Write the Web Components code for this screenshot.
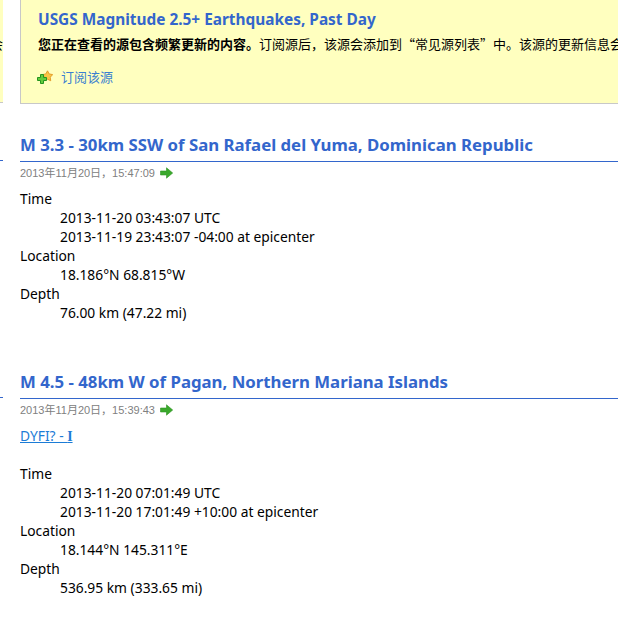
<!DOCTYPE html>
<html lang="zh">
<head>
<meta charset="utf-8">
<title>USGS Magnitude 2.5+ Earthquakes, Past Day</title>
<style>
  html, body { margin: 0; padding: 0; height: 100%; overflow: hidden; background: #fff; }
</style>
</head>
<body>
<feed-page>
  <feed-sliver slot="side"></feed-sliver>
  <feed-banner heading="USGS Magnitude 2.5+ Earthquakes, Past Day" action="订阅该源">
    <b>您正在查看的源包含频繁更新的内容。</b>订阅源后，该源会添加到“常见源列表”中。该源的更新信息会
  </feed-banner>
  <feed-entry heading="M 3.3 - 30km SSW of San Rafael del Yuma, Dominican Republic" stamp="2013年11月20日，15:47:09">
    <dt>Time</dt>
    <dd>2013-11-20 03:43:07 UTC</dd>
    <dd>2013-11-19 23:43:07 -04:00 at epicenter</dd>
    <dt>Location</dt>
    <dd>18.186°N 68.815°W</dd>
    <dt>Depth</dt>
    <dd>76.00 km (47.22 mi)</dd>
  </feed-entry>
  <feed-entry heading="M 4.5 - 48km W of Pagan, Northern Mariana Islands" stamp="2013年11月20日，15:39:43" dyfi="I">
    <dt>Time</dt>
    <dd>2013-11-20 07:01:49 UTC</dd>
    <dd>2013-11-20 17:01:49 +10:00 at epicenter</dd>
    <dt>Location</dt>
    <dd>18.144°N 145.311°E</dd>
    <dt>Depth</dt>
    <dd>536.95 km (333.65 mi)</dd>
  </feed-entry>
</feed-page>
<script>
const FONT = "'Noto Sans', 'Noto Sans CJK SC', sans-serif";

const pageTemplate = document.createElement('template');
pageTemplate.innerHTML = `
  <style>
    :host {
      display: grid;
      grid-template-columns: 3px 660px;
      column-gap: 17px;
      height: 632px;
      overflow: hidden;
      font-family: ${FONT};
      font-size: 13.8px;
      color: #000;
    }
    .main { display: flex; flex-direction: column; }
  </style>
  <div class="side"><slot name="side"></slot></div>
  <div class="main"><slot></slot></div>
`;

class FeedPage extends HTMLElement {
  constructor () {
    super();
    this.attachShadow({ mode: 'open' });
    this.shadowRoot.appendChild(pageTemplate.content.cloneNode(true));
  }
}

// the neighbouring column, scrolled almost out of view
const sliverTemplate = document.createElement('template');
sliverTemplate.innerHTML = `
  <style>
    :host { display: block; width: 3px; overflow: hidden; }
    .panel {
      height: 103px;
      box-sizing: border-box;
      background: #ffffbf;
      border-bottom: 1px solid #c8c8c8;
      padding-top: 34px;
      font-family: 'Noto Sans CJK SC', sans-serif;
      font-size: 13px;
      line-height: 20px;
    }
    .panel span { display: block; margin-left: -10px; white-space: nowrap; }
    .rule { height: 1px; background: #3366cc; }
    .first { margin-top: 57px; }
    .second { margin-top: 236px; }
  </style>
  <div class="panel"><span>会</span></div>
  <div class="rule first"></div>
  <div class="rule second"></div>
`;

class FeedSliver extends HTMLElement {
  constructor () {
    super();
    this.attachShadow({ mode: 'open' });
    this.shadowRoot.appendChild(sliverTemplate.content.cloneNode(true));
  }
}

const bannerTemplate = document.createElement('template');
bannerTemplate.innerHTML = `
  <style>
    :host {
      display: block;
      height: 104px;
      box-sizing: border-box;
      background: #ffffbf;
      border: 1px solid #c8c8c8;
      border-top: 0;
      padding: 9px 0 0 17px;
      margin-bottom: 29px;
    }
    h1 {
      margin: 0;
      font-size: 15.4px;
      line-height: 22px;
      font-weight: 700;
      color: #3366cc;
      white-space: nowrap;
    }
    p {
      margin: 3px 0 0;
      font-family: 'Noto Sans CJK SC', sans-serif;
      font-size: 13px;
      line-height: 20px;
      white-space: nowrap;
    }
    .action {
      display: flex;
      align-items: center;
      gap: 8px;
      margin: 13px 0 0 -1px;
      color: #3a7fd0;
      font-family: 'Noto Sans CJK SC', sans-serif;
      font-size: 13px;
      line-height: 20px;
    }
    svg { display: block; }
  </style>
  <h1></h1>
  <p><slot></slot></p>
  <div class="action">
    <svg width="16" height="15" viewBox="0 0 16 15">
      <path d="M10.5.8L12.2 3.95 15.7 4.6 13.26 7.2 13.73 10.75 10.5 9.2 7.27 10.75 7.74 7.2 5.27 4.6 8.8 3.95z" fill="#f9c647" stroke="#e09624" stroke-width=".9"/>
      <path d="M3.5 4.5h3v3h3v3h-3v3h-3v-3h-3v-3h3z" fill="#62cc3c" stroke="#259420"/>
    </svg>
    <span class="label"></span>
  </div>
`;

class FeedBanner extends HTMLElement {
  constructor () {
    super();
    this.attachShadow({ mode: 'open' });
    this.shadowRoot.appendChild(bannerTemplate.content.cloneNode(true));
    this.shadowRoot.querySelector('h1').textContent = this.getAttribute('heading');
    this.shadowRoot.querySelector('.label').textContent = this.getAttribute('action');
  }
}

const entryTemplate = document.createElement('template');
entryTemplate.innerHTML = `
  <style>
    :host {
      display: block;
      margin-bottom: 48px;
    }
    h2 {
      margin: 0;
      padding-bottom: 4px;
      font-size: 16.8px;
      line-height: 24px;
      font-weight: 700;
      color: #3366cc;
      border-bottom: 1px solid #3366cc;
      white-space: nowrap;
    }
    .stamp {
      display: flex;
      align-items: center;
      gap: 5px;
      margin-top: 2px;
      font-family: 'Liberation Sans', 'Noto Sans CJK SC', sans-serif;
      font-size: 11px;
      line-height: 18px;
      color: #808080;
    }
    .dyfi {
      margin-top: 7px;
      margin-bottom: 17px;
      line-height: 20px;
      color: #1c7cd6;
    }
    .dyfi a { color: inherit; }
    .dyfi b { font-family: 'Liberation Serif', serif; }
    .list { margin-top: 7px; }
    .dyfi + .list { margin-top: 0; }
    ::slotted(dt) { line-height: 19px; }
    ::slotted(dd) { line-height: 19px; margin: 0 0 0 40px; }
    svg { display: block; }
  </style>
  <h2></h2>
  <div class="stamp">
    <span class="when"></span>
    <svg width="13" height="12" viewBox="0 0 13 12">
      <path d="M.5 4h6V.8L12.7 6 6.5 11.2V8H.5z" fill="#3aa82c" stroke="#2f9424" stroke-width=".6"/>
    </svg>
  </div>
  <div class="list"><slot></slot></div>
`;

class FeedEntry extends HTMLElement {
  constructor () {
    super();
    this.attachShadow({ mode: 'open' });
    this.shadowRoot.appendChild(entryTemplate.content.cloneNode(true));
    this.shadowRoot.querySelector('h2').textContent = this.getAttribute('heading');
    this.shadowRoot.querySelector('.when').textContent = this.getAttribute('stamp');
    if (this.hasAttribute('dyfi')) {
      const dyfi = document.createElement('div');
      dyfi.className = 'dyfi';
      dyfi.innerHTML = '<a href="#">DYFI? - <b></b></a>';
      dyfi.querySelector('b').textContent = this.getAttribute('dyfi');
      this.shadowRoot.querySelector('.list').before(dyfi);
    }
  }
}

customElements.define('feed-page', FeedPage);
customElements.define('feed-sliver', FeedSliver);
customElements.define('feed-banner', FeedBanner);
customElements.define('feed-entry', FeedEntry);
</script>
</body>
</html>
